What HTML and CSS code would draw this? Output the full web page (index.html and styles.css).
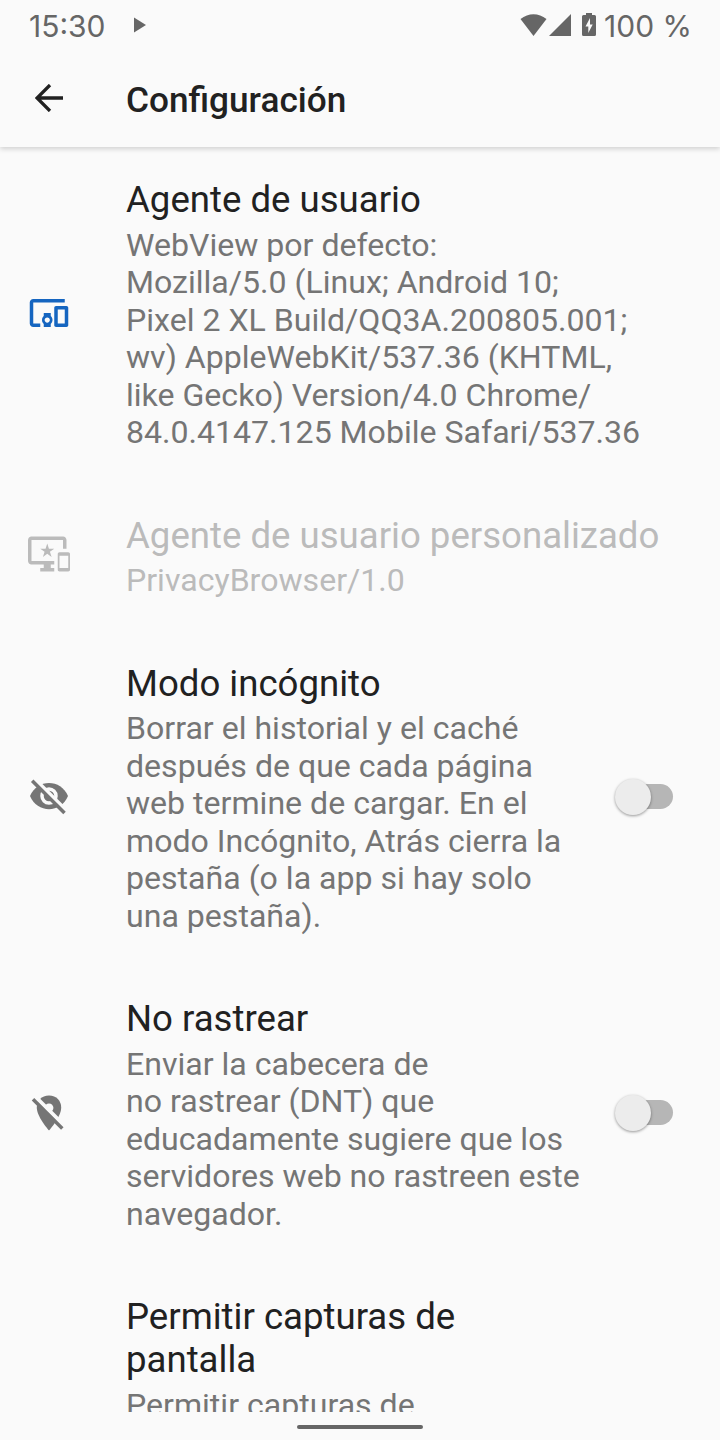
FILE: index.html
```html
<!DOCTYPE html>
<html lang="es">
<head>
<meta charset="utf-8">
<title>Configuración</title>
<link rel="stylesheet" href="styles.css">
</head>
<body>
<div class="screen">
  <div class="status">
    <span class="clock">15:30</span>
    <svg class="play" viewBox="0 0 12 16"><path d="M0 0.5L12 8L0 15.5z"/></svg>
    <div class="indicators">
      <svg class="wifi" viewBox="0 0 27 22"><path d="M0.5 5C8.5-1.3 18.500-1.3 26.500 5L13.500 22z"/></svg>
      <svg class="signal" viewBox="0 0 22 22"><path d="M22 0V22H0z"/></svg>
      <svg class="battery" viewBox="0 0 14 23"><path fill-rule="evenodd" d="M4 0h6v2h2.500q1.500 0 1.500 1.500v18q0 1.500-1.500 1.500h-11Q0 23 0 21.500v-18Q0 2 1.500 2H4zM8 5L3.500 13.500H6.300V20L10.700 11.500H8z"/></svg>
      <span class="percent">100 %</span>
    </div>
  </div>
  <header class="appbar">
    <svg class="back" viewBox="0 0 28 28"><path d="M28 14H2M15 1L2 14L15 27"/></svg>
    <h1 class="heading">Configuración</h1>
  </header>
  <main class="list">
    <section class="item">
      <svg class="icon blue" viewBox="0 0 24 24"><path d="M3 6h18V4H3c-1.100 0-2 .9-2 2v12c0 1.100.9 2 2 2h4v-2H3V6zm10 6H9v1.780c-.61.55-1 1.330-1 2.220s.39 1.670 1 2.220V20h4v-1.780c.61-.55 1-1.340 1-2.220s-.39-1.670-1-2.220V12zm-2 5.500c-.83 0-1.500-.67-1.500-1.500s.67-1.500 1.500-1.500 1.500.67 1.500 1.500-.67 1.500-1.500 1.500zM22 8h-6c-.5 0-1 .5-1 1v10c0 .5.5 1 1 1h6c.5 0 1-.5 1-1V9c0-.5-.5-1-1-1zm-1 10h-4v-8h4v8z"/></svg>
      <div class="text">
        <h2 class="title">Agente de usuario</h2>
        <p class="summary">WebView por defecto:<br>Mozilla/5.0 (Linux; Android 10;<br>Pixel 2 XL Build/QQ3A.200805.001;<br>wv) AppleWebKit/537.36 (KHTML,<br>like Gecko) Version/4.0 Chrome/<br>84.0.4147.125 Mobile Safari/537.36</p>
      </div>
    </section>
    <section class="item disabled">
      <svg class="icon" viewBox="0 0 24 24"><path d="M23 11.010L18 11c-.55 0-1 .45-1 1v9c0 .55.45 1 1 1h5c.55 0 1-.45 1-1v-9c0-.55-.45-.99-1-.99zM23 20h-5v-7h5v7zM20 2H2C.89 2 0 2.890 0 4v12c0 1.100.89 2 2 2h7v2H7v2h8v-2h-2v-2h2v-2H2V4h18v5h2V4c0-1.110-.9-2-2-2zm-8.030 7L11 6l-.97 3H7l2.470 1.760-.94 2.910 2.470-1.800 2.470 1.800-.94-2.910L15 9h-3.030z"/></svg>
      <div class="text">
        <h2 class="title">Agente de usuario personalizado</h2>
        <p class="summary">PrivacyBrowser/1.0</p>
      </div>
    </section>
    <section class="item">
      <svg class="icon" viewBox="0 0 42 42"><path d="M2 21C9 3.500 33 3.500 40 21C33 38.500 9 38.500 2 21z"/><circle class="ring" cx="21" cy="21" r="7"/><path class="gap" d="M6 3.500L38 35.500"/><path class="slash" d="M4.200 5.700L36.500 38"/></svg>
      <div class="text">
        <h2 class="title">Modo incógnito</h2>
        <p class="summary">Borrar el historial y el caché<br>después de que cada página<br>web termine de cargar. En el<br>modo Incógnito, Atrás cierra la<br>pestaña (o la app si hay solo<br>una pestaña).</p>
      </div>
      <span class="switch"></span>
    </section>
    <section class="item">
      <svg class="icon" viewBox="0 0 42 42"><path d="M21 3.500C13.500 3.500 8.800 9 8.800 15.500C8.800 25 21 38.500 21 38.500C21 38.500 33.200 25 33.200 15.500C33.200 9 28.500 3.500 21 3.500z"/><circle class="hole" cx="21" cy="15.800" r="4.400"/><path class="gap" d="M6 3.500L38 35.500"/><path class="slash" d="M5 7.200L34.300 36.500"/></svg>
      <div class="text">
        <h2 class="title">No rastrear</h2>
        <p class="summary">Enviar la cabecera de<br>no rastrear (DNT) que<br>educadamente sugiere que los<br>servidores web no rastreen este<br>navegador.</p>
      </div>
      <span class="switch"></span>
    </section>
    <section class="item">
      <div class="text only">
        <h2 class="title">Permitir capturas de<br>pantalla</h2>
        <p class="summary">Permitir capturas de</p>
      </div>
    </section>
  </main>
  <footer class="nav"><span class="pill"></span></footer>
</div>
</body>
</html>
```
FILE: styles.css
```css
* { box-sizing: border-box; }
body { margin: 0; background: #fafafa; font-family: Roboto, sans-serif; }
h1, h2, p { margin: 0; font-weight: 400; }
svg { display: block; flex: none; fill: currentColor; }
.screen { width: 720px; height: 1440px; display: flex; flex-direction: column; overflow: hidden; background: #fafafa; }
.status { position: relative; z-index: 2; flex: none; height: 49px; padding: 3px 27px 0 29px; display: flex; align-items: center; color: #666; background: #fafafa; font: 430 30px/46px Inter, sans-serif; }
.clock { width: 78px; white-space: nowrap; }
.play { width: 12px; height: 16px; margin: -3px 0 0 27px; }
.indicators { margin-left: auto; display: flex; align-items: center; }
.wifi { width: 27px; height: 22px; margin: -3px 2px 0 0; }
.signal { width: 22px; height: 22px; margin: -3px 11px 0 0; }
.battery { width: 14px; height: 23px; margin: -3px 8px 0 0; }
.percent { width: 89px; white-space: nowrap; }
.appbar { position: relative; z-index: 1; flex: none; height: 98px; display: flex; align-items: center; padding-left: 35px; color: #212121; background: #fafafa; box-shadow: 0 2px 5px rgba(0, 0, 0, 0.17); }
.back { width: 28px; height: 28px; fill: none; stroke: currentColor; stroke-width: 3.3; }
.heading { margin: 3px 0 0 63px; font-size: 35.2px; font-weight: 500; line-height: 42px; }
.list { flex: none; height: 1265px; overflow: hidden; color: #757575; }
.item { display: flex; align-items: center; padding: 33px 47px 29.5px 28px; }
.item:first-child { padding-top: 31px; }
.icon { width: 42px; height: 42px; margin-top: -4px; }
.blue { color: #1565c0; }
.ring { fill: none; stroke: #fafafa; stroke-width: 3.5; }
.hole { fill: #fafafa; }
.gap { fill: none; stroke: #fafafa; stroke-width: 4; }
.slash { fill: none; stroke: currentColor; stroke-width: 3.5; }
.text { flex: 1; margin-left: 56px; white-space: nowrap; }
.only { margin-left: 98px; }
.title { color: #212121; font-size: 36.58px; line-height: 43px; }
.summary { margin: 5.5px 0 -0.5px; font-size: 32.08px; line-height: 37.5px; }
.disabled, .disabled .title { color: #bbb; }
.switch { position: relative; flex: none; width: 57px; height: 25px; margin-top: -4px; border-radius: 13px; background: #b6b6b6; }
.switch::after { content: ""; position: absolute; left: -1px; top: -5px; width: 36px; height: 36px; border-radius: 50%; background: #ececec; box-shadow: 0 1px 3px rgba(0, 0, 0, 0.4); }
.nav { flex: 1; display: flex; justify-content: center; padding-top: 13px; }
.pill { width: 126px; height: 4px; border-radius: 2px; background: #666; }
```
